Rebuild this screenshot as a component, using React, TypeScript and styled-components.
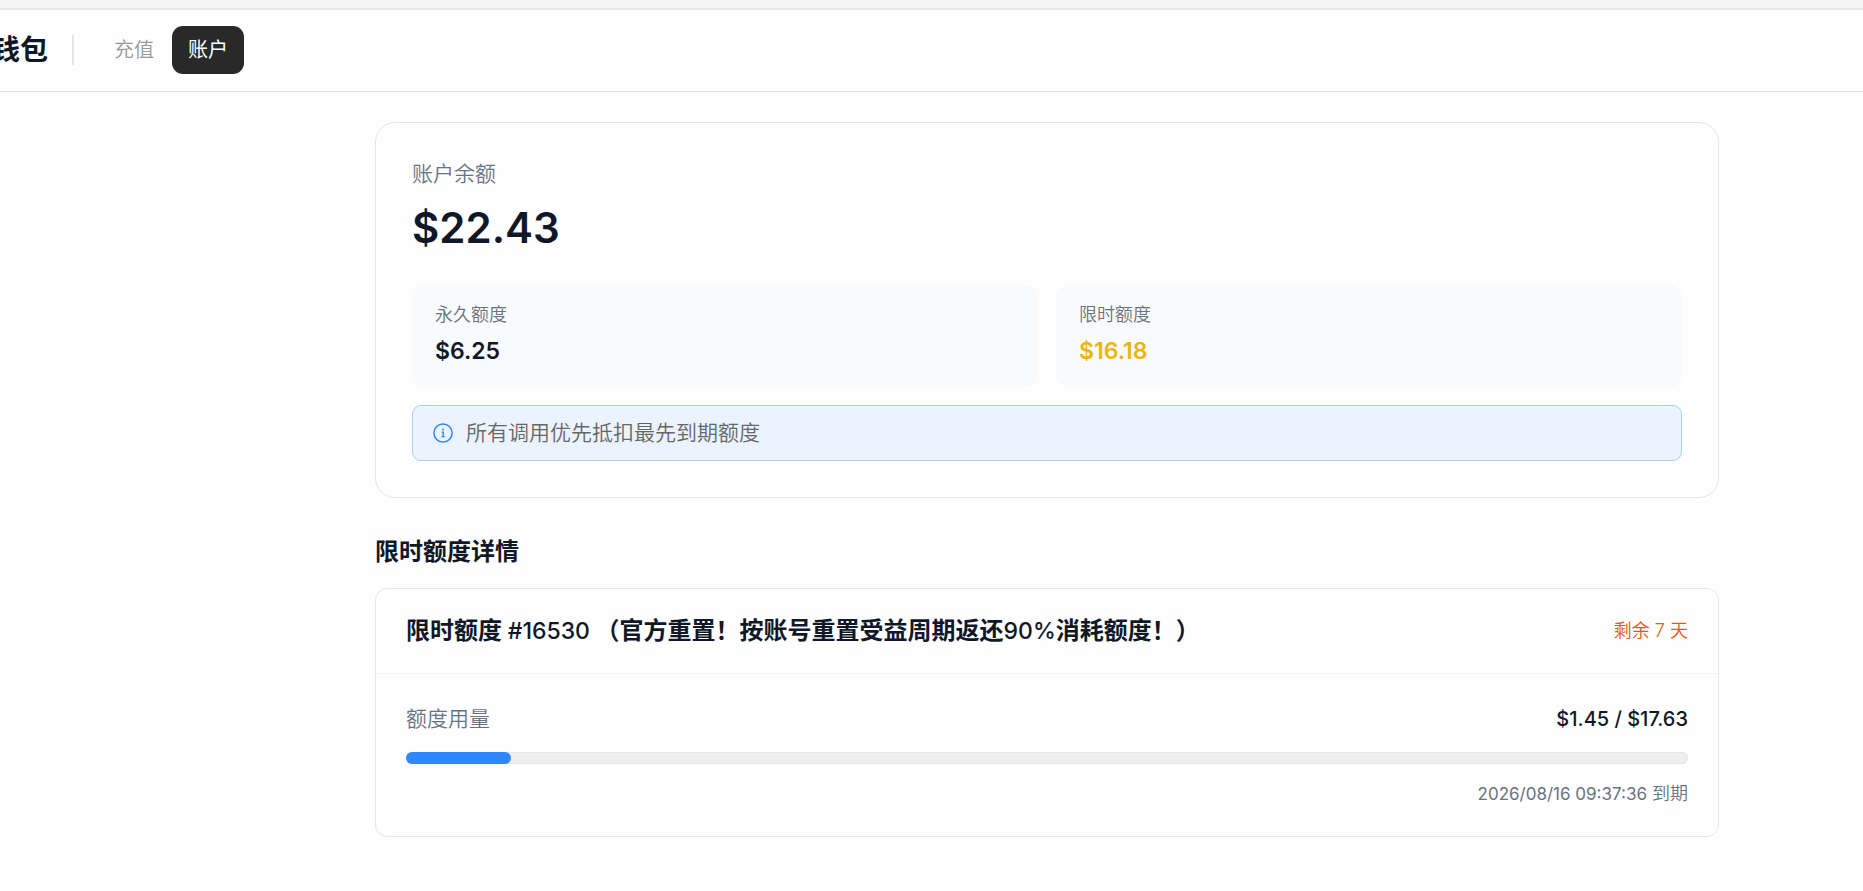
import React from "react";
import styled, { createGlobalStyle } from "styled-components";

const GlobalStyle = createGlobalStyle`
  *, *::before, *::after { box-sizing: border-box; }
  body {
    margin: 0;
    background: #fefefe;
    color: #101828;
    font-family: Inter, "Noto Sans CJK SC", sans-serif;
    font-size: 21px;
    line-height: 30px;
    overflow-x: hidden;
  }
  h1, h2, h3, p { margin: 0; }
`;

const TopStrip = styled.div`
  height: 10px;
  background: #f5f5f5;
  border-bottom: 2px solid #e8e8e8;
`;

const Header = styled.header`
  display: flex;
  align-items: center;
  height: 82px;
  padding-bottom: 2px;
  border-bottom: 1px solid #e5e5e5;
  overflow: hidden;
`;

const Title = styled.h1`
  margin-left: -8px;
  font-size: 28px;
  line-height: 36px;
  font-weight: 700;
  white-space: nowrap;
`;

const Divider = styled.span`
  width: 2px;
  height: 30px;
  margin: 0 24px;
  background: #e5e5e5;
`;

const Tabs = styled.nav`
  display: flex;
  gap: 2px;
`;

const Tab = styled.button<{ $active?: boolean }>`
  height: 48px;
  padding: 0 16px;
  border: 0;
  border-radius: 11px;
  background: ${(p) => (p.$active ? "#292929" : "transparent")};
  color: ${(p) => (p.$active ? "#ffffff" : "#999999")};
  font: inherit;
  font-size: 20px;
  font-weight: ${(p) => (p.$active ? 400 : 350)};
  cursor: pointer;
`;

const Main = styled.main`
  padding: 30px 144px 54px 375px;
`;

const BalanceCard = styled.section`
  padding: 36px;
  border: 1px solid #e5e5e5;
  border-radius: 20px;
`;

const Label = styled.p<{ $small?: boolean }>`
  color: #6a7282;
  font-weight: 350;
  font-size: ${(p) => (p.$small ? 18 : 21)}px;
  line-height: ${(p) => (p.$small ? 24 : 30)}px;
`;

const Balance = styled.p`
  margin: 12px 0 30px;
  font-size: 42px;
  line-height: 54px;
  font-weight: 600;
`;

const Tiles = styled.div`
  display: grid;
  grid-template-columns: 1fr 1fr;
  gap: 18px;
`;

const Tile = styled.div`
  padding: 18px 23px;
  border-radius: 12px;
  background: #f9fafb;
`;

const TileValue = styled.p<{ $accent?: boolean }>`
  margin-top: 6px;
  font-size: 23px;
  line-height: 36px;
  font-weight: 600;
  color: ${(p) => (p.$accent ? "#e8b60c" : "#101828")};
`;

const Notice = styled.div`
  display: flex;
  align-items: center;
  gap: 13px;
  margin-top: 18px;
  padding: 12px 20px;
  border: 1px solid #afcff0;
  border-radius: 9px;
  background: #ebf3fe;
  color: #666666;
  font-weight: 350;

  svg { flex: none; }
`;

const SectionTitle = styled.h2`
  margin: 36px 0 18px;
  font-size: 24px;
  line-height: 36px;
  font-weight: 700;
`;

const QuotaCard = styled.article`
  border: 1px solid #e5e7eb;
  border-radius: 12px;
`;

const QuotaHeader = styled.div`
  display: flex;
  align-items: center;
  justify-content: space-between;
  padding: 24px 30px;
  border-bottom: 1px solid #f3f4f6;
`;

const QuotaTitle = styled.h3`
  font-size: 24px;
  line-height: 36px;
  font-weight: 700;
`;

const Latin = styled.span`
  font-size: 23px;
  font-weight: 500;
`;

const Remaining = styled.span`
  font-size: 18px;
  font-weight: 350;
  color: #e8590c;
`;

const QuotaBody = styled.div`
  padding: 30px;
`;

const Row = styled.div`
  display: flex;
  align-items: center;
  justify-content: space-between;
`;

const Usage = styled.span`
  font-size: 20px;
  font-weight: 500;
`;

const Track = styled.div`
  height: 12px;
  margin: 18px 0;
  border-radius: 6px;
  background: #eeeeee;
  box-shadow: inset 0 0 0 1px #e5e5e5;
`;

const Fill = styled.div`
  height: 100%;
  border-radius: 6px;
  background: #2f86ff;
`;

const Expiry = styled.p`
  font-size: 18px;
  line-height: 24px;
  font-weight: 350;
  text-align: right;
  color: #6a7282;
`;

const Time = styled.time`
  font-size: 17px;
  font-weight: 400;
`;

const InfoIcon = () => (
  <svg width="20" height="20" viewBox="0 0 20 20" fill="none" aria-hidden="true">
    <circle cx="10" cy="10" r="9.1" stroke="#2f86ff" strokeWidth="1.5" />
    <circle cx="10" cy="6.6" r="1" fill="#2f86ff" />
    <path d="M8.6 9.2h1.6v4.2M8.5 13.6h3.2" stroke="#2f86ff" strokeWidth="1.3" />
  </svg>
);

const used = 1.45;
const total = 17.63;

export default function App() {
  return (
    <>
      <GlobalStyle />
      <TopStrip />
      <Header>
        <Title>钱包</Title>
        <Divider />
        <Tabs>
          <Tab type="button">充值</Tab>
          <Tab type="button" $active aria-current="page">账户</Tab>
        </Tabs>
      </Header>
      <Main>
        <BalanceCard>
          <Label>账户余额</Label>
          <Balance>$22.43</Balance>
          <Tiles>
            <Tile>
              <Label $small>永久额度</Label>
              <TileValue>$6.25</TileValue>
            </Tile>
            <Tile>
              <Label $small>限时额度</Label>
              <TileValue $accent>$16.18</TileValue>
            </Tile>
          </Tiles>
          <Notice>
            <InfoIcon />
            <span>所有调用优先抵扣最先到期额度</span>
          </Notice>
        </BalanceCard>
        <SectionTitle>限时额度详情</SectionTitle>
        <QuotaCard>
          <QuotaHeader>
            <QuotaTitle>
              限时额度 <Latin>#16530</Latin> （官方重置！按账号重置受益周期返还<Latin>90%</Latin>消耗额度！）
            </QuotaTitle>
            <Remaining>剩余 7 天</Remaining>
          </QuotaHeader>
          <QuotaBody>
            <Row>
              <Label>额度用量</Label>
              <Usage>${used} / ${total}</Usage>
            </Row>
            <Track role="progressbar" aria-label="额度用量" aria-valuenow={used} aria-valuemin={0} aria-valuemax={total}>
              <Fill style={{ width: `${(used / total) * 100}%` }} />
            </Track>
            <Expiry><Time>2026/08/16 09:37:36</Time> 到期</Expiry>
          </QuotaBody>
        </QuotaCard>
      </Main>
    </>
  );
}
